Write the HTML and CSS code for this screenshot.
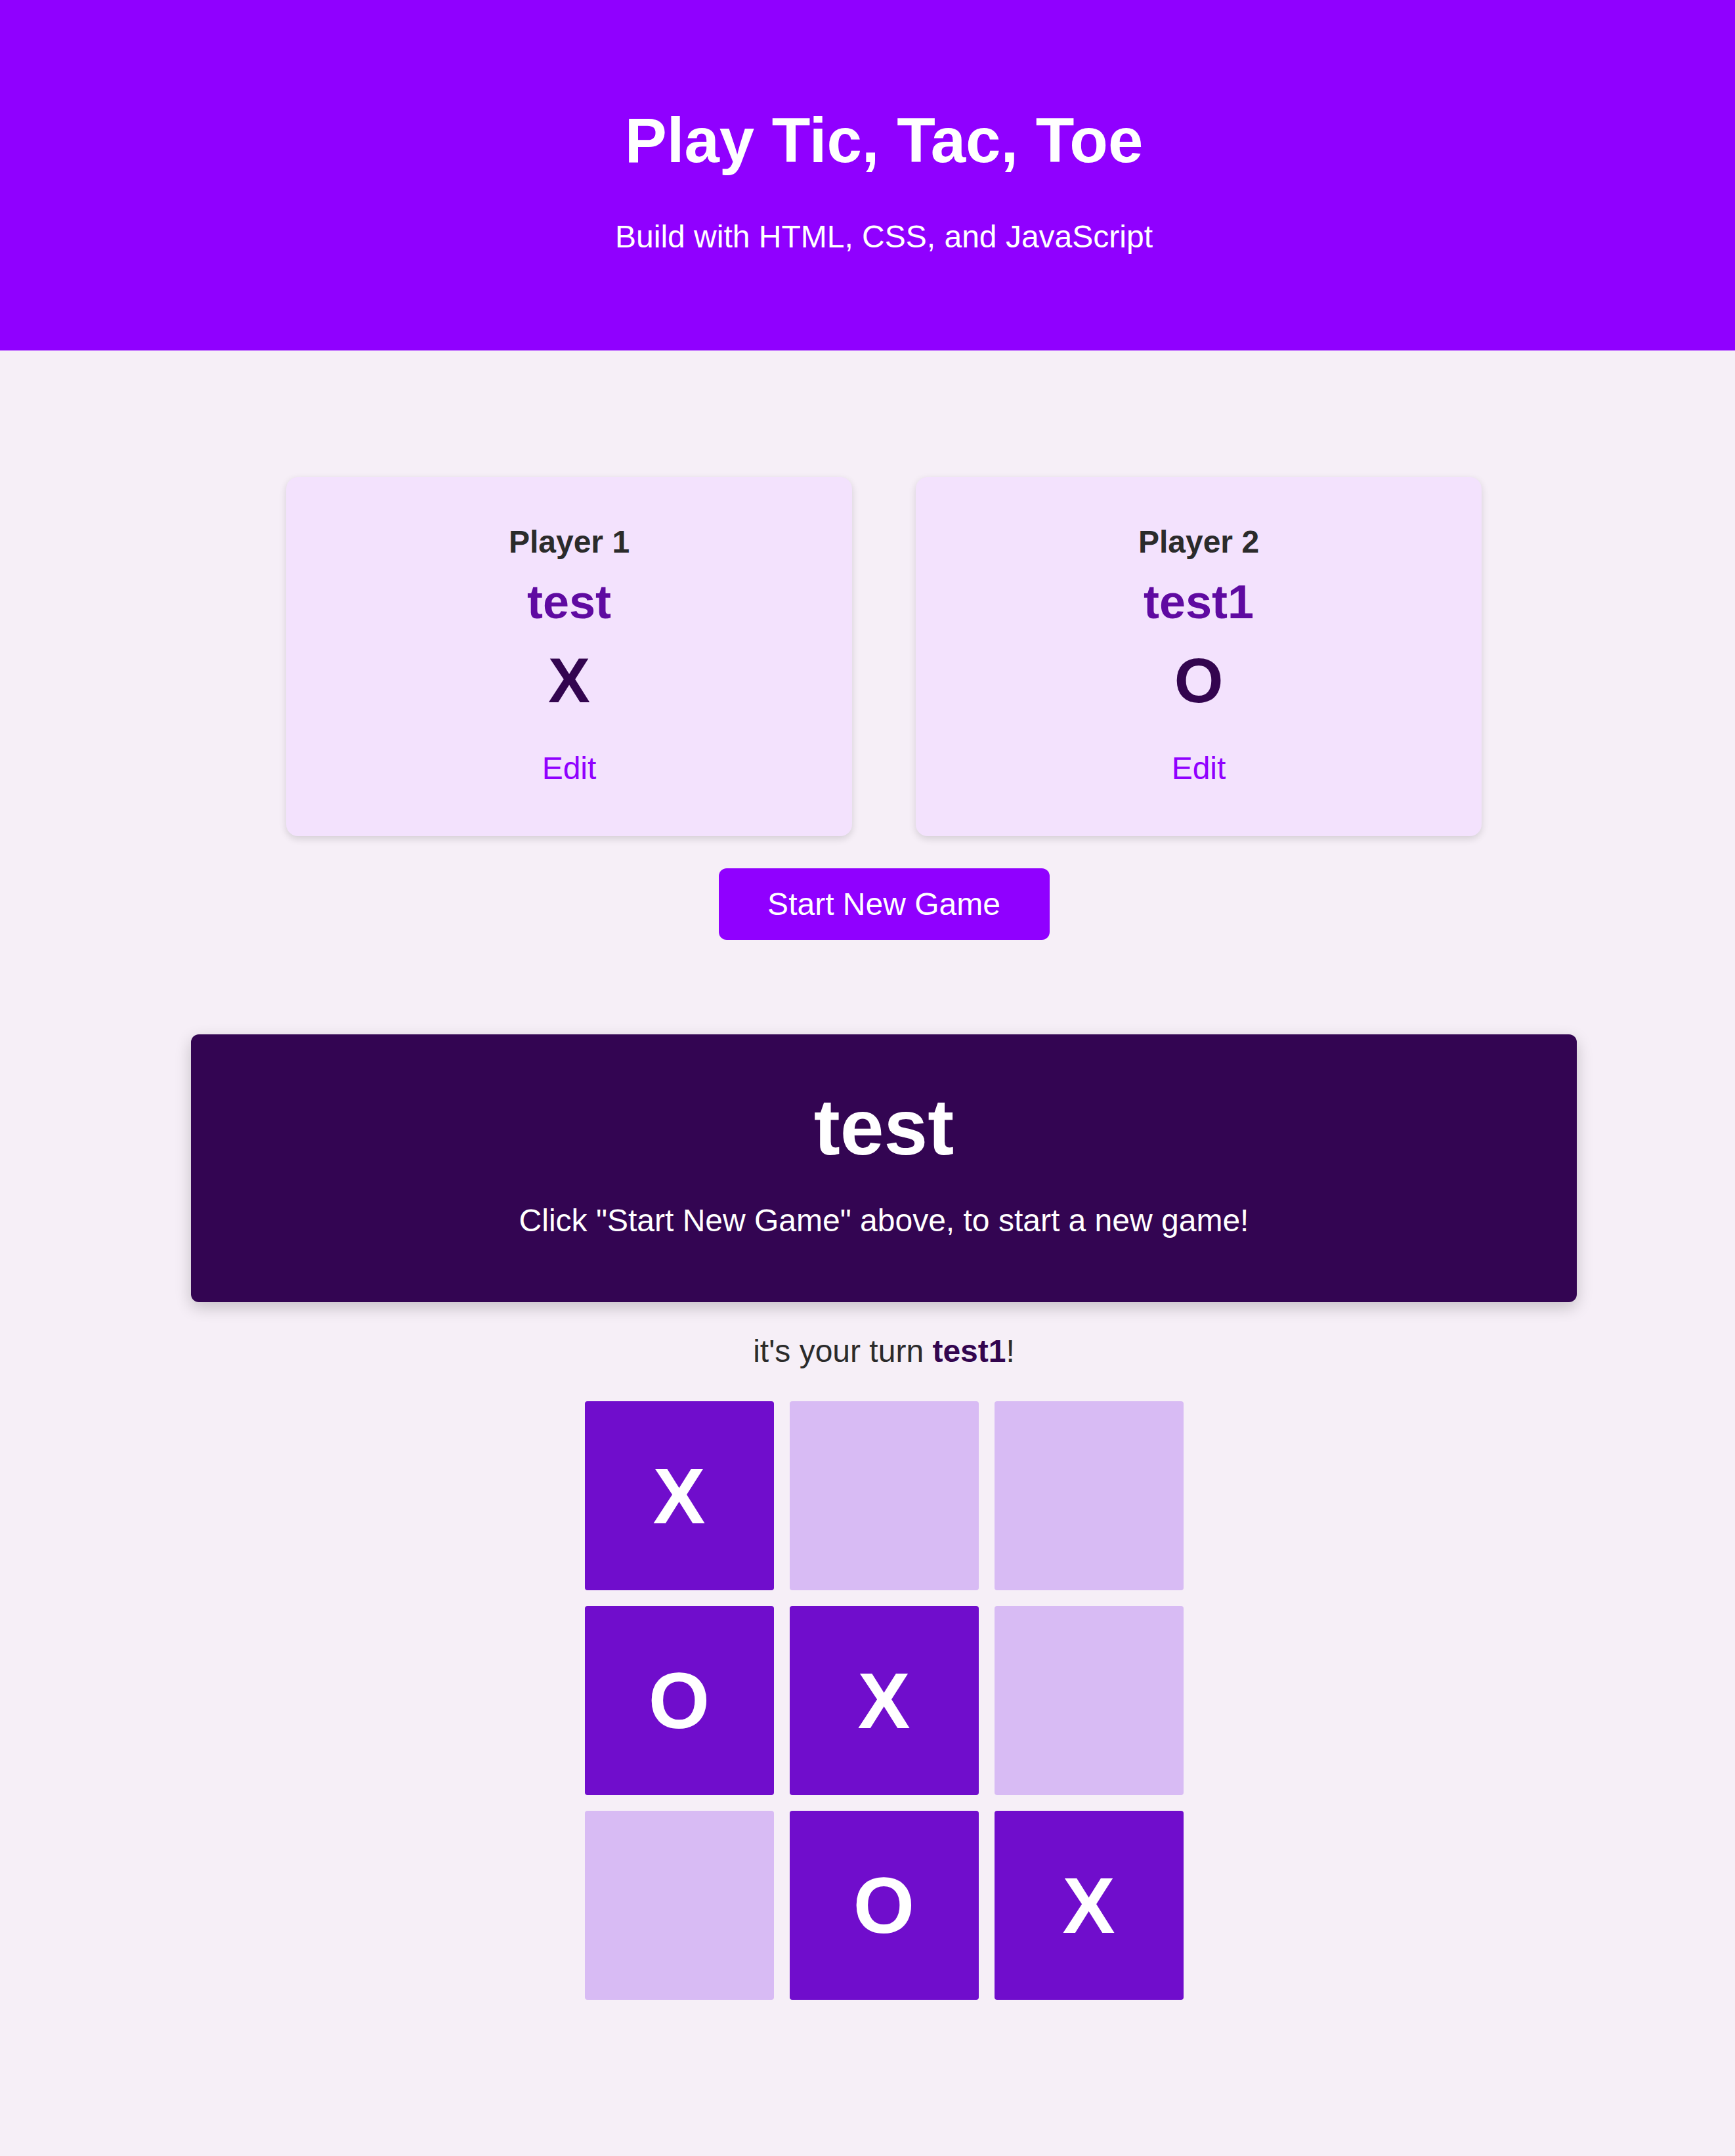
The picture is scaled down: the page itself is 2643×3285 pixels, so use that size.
FILE: index.html
```html
<!DOCTYPE html>
<html lang="en">
<head>
<meta charset="utf-8">
<title>Tic Tac Toe</title>
<link rel="stylesheet" href="styles.css">
</head>
<body>
<header class="site-header">
  <h1 class="site-title">Play Tic, Tac, Toe</h1>
  <p class="site-subtitle">Build with HTML, CSS, and JavaScript</p>
</header>
<main class="main">
  <section class="players">
    <article class="player-card">
      <h2 class="player-label">Player 1</h2>
      <h3 class="player-name">test</h3>
      <p class="player-symbol">X</p>
      <button class="edit-btn">Edit</button>
    </article>
    <article class="player-card">
      <h2 class="player-label">Player 2</h2>
      <h3 class="player-name">test1</h3>
      <p class="player-symbol">O</p>
      <button class="edit-btn">Edit</button>
    </article>
  </section>
  <div class="actions">
    <button class="start-btn">Start New Game</button>
  </div>
  <section class="game-over">
    <h2 class="winner">test</h2>
    <p class="game-over-text">Click "Start New Game" above, to start a new game!</p>
  </section>
  <p class="turn">it's your turn <strong class="turn-name">test1</strong>!</p>
  <ol class="board">
    <li class="cell filled">X</li>
    <li class="cell"></li>
    <li class="cell"></li>
    <li class="cell filled">O</li>
    <li class="cell filled">X</li>
    <li class="cell"></li>
    <li class="cell"></li>
    <li class="cell filled">O</li>
    <li class="cell filled">X</li>
  </ol>
</main>
</body>
</html>
```
FILE: styles.css
```css
* {
  box-sizing: border-box;
}

html, body {
  margin: 0;
  padding: 0;
}

body {
  background: #f6eff7;
  font-family: "Liberation Sans", Arial, sans-serif;
  color: #2b2b2b;
  min-height: 3285px;
}

.site-header {
  background: #9000ff;
  color: #ffffff;
  text-align: center;
  height: 534px;
  padding: 159px 0 0 50px;
}

.site-title {
  margin: 0;
  font-size: 96px;
  font-weight: bold;
}

.site-subtitle {
  margin: 64px 0 0;
  font-size: 48px;
}

.main {
  padding: 193px 0 0 50px;
  display: flex;
  flex-direction: column;
  align-items: center;
}

.players {
  display: grid;
  grid-template-columns: 862px 862px;
  gap: 97px;
}

.player-card {
  background: #f3e2fd;
  border-radius: 18px;
  height: 547px;
  padding-top: 71px;
  text-align: center;
  box-shadow: 0 4px 12px rgba(0, 0, 0, 0.14);
  display: flex;
  flex-direction: column;
  align-items: center;
}

.player-label {
  margin: 0;
  font-size: 48px;
  font-weight: bold;
  color: #2b2b2b;
}

.player-name {
  margin: 23px 0 0;
  font-size: 72px;
  font-weight: bold;
  color: #5f0aa1;
}

.player-symbol {
  margin: 24px 0 0;
  font-size: 96px;
  font-weight: bold;
  color: #33054f;
}

.edit-btn {
  margin-top: 51px;
  padding: 0;
  border: none;
  background: none;
  font-family: inherit;
  font-size: 48px;
  line-height: normal;
  color: #9000ff;
  cursor: pointer;
}

.actions {
  margin-top: 49px;
}

.start-btn {
  width: 504px;
  height: 109px;
  border: none;
  border-radius: 12px;
  background: #9000ff;
  color: #ffffff;
  font-family: inherit;
  font-size: 48px;
  cursor: pointer;
}

.game-over {
  margin-top: 144px;
  width: 2111px;
  background: #330552;
  color: #ffffff;
  border-radius: 12px;
  padding: 72px 0 97px;
  text-align: center;
  box-shadow: 0 8px 24px rgba(0, 0, 0, 0.2);
}

.winner {
  margin: 0;
  font-size: 120px;
  font-weight: bold;
}

.game-over-text {
  margin: 46px 0 0;
  font-size: 48px;
}

.turn {
  margin: 47px 0 0;
  font-size: 48px;
  color: #2b2b2b;
}

.turn-name {
  color: #33054f;
}

.board {
  list-style: none;
  margin: 49px 0 0;
  padding: 0;
  display: grid;
  grid-template-columns: repeat(3, 288px);
  grid-auto-rows: 288px;
  gap: 24px;
}

.cell {
  background: #d8bbf4;
  border-radius: 4px;
  display: flex;
  align-items: center;
  justify-content: center;
  font-size: 120px;
  font-weight: bold;
  color: #ffffff;
}

.cell.filled {
  background: #700dcc;
}
```
